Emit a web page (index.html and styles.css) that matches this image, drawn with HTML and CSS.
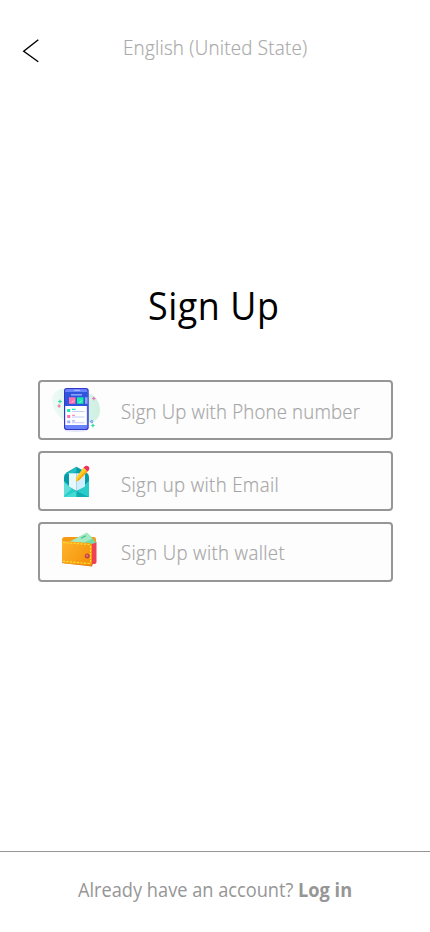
FILE: index.html
```html
<!DOCTYPE html>
<html lang="en">
<head>
<meta charset="utf-8">
<meta name="viewport" content="width=device-width, initial-scale=1">
<title>Sign Up</title>
<link rel="stylesheet" href="styles.css">
</head>
<body>
<div class="screen">
  <header class="topbar">
    <svg class="back" viewBox="0 0 18 26"><path d="M16.3 2.8 1.7 14.3 16.3 24.800"/></svg>
    <span class="language">English (United State)</span>
  </header>
  <main class="content">
    <h1 class="title">Sign Up</h1>
    <div class="options">
      <a class="option">
        <svg class="icon" viewBox="40 382 64 56">
          <defs>
            <linearGradient id="blob"><stop offset="0" stop-color="#edfaf5"/><stop offset="1" stop-color="#cdf0e1"/></linearGradient>
          </defs>
          <path fill="url(#blob)" d="M52.500 397c2-6 8-9 14.500-8 7 1 8 4 17 4 10-1 16 8 16 17 0 10-7 13-14 12-9-1-12 3-20-1-4-2-7-4-10-9-3-4-4.500-10-3.500-15z"/>
          <ellipse cx="76" cy="430.5" rx="11.5" ry="1.5" fill="#e3e5fb"/>
          <rect x="64" y="388" width="24.7" height="42" rx="2.8" fill="#3336c4"/>
          <rect x="65" y="389" width="22.5" height="40" rx="2" fill="#6a83fa"/>
          <path fill="#2f54dd" d="M65 392h22.5v14H65z"/>
          <path fill="#fff" d="M65.3 406h21.5v19H65.3z"/>
          <path stroke="#b7c2ff" d="M74 390.3h6"/>
          <path stroke="#8fa8f8" stroke-width="1.5" d="M71 394.8h11"/>
          <path fill="#ff6fb0" d="M69 397.3h6.5v6.5H69z"/>
          <path fill="#11efa9" d="M77 397.3h6.4v6.5H77z"/>
          <path fill="#92a6fb" d="M85 397.3h2.5v6.5H85z"/>
          <path fill="none" stroke="#fff" stroke-width=".6" d="m71.500 402.4 1.500-.8 1.200-1.300m5.300 2.100 1.500-.8 1.200-1.300"/>
          <path fill="#11efa9" d="M67.2 409h3v3h-3zM72 408.8h3.5v1.1H72z"/>
          <path fill="#ff6fb0" d="M67.2 415h3v3h-3zM72 414.7h3v1.1h-3z"/>
          <path fill="#a2adff" d="M67.2 420.5h3v2.8h-3zM72 420.3h3v1.1h-3z"/>
          <path stroke="#c4cafd" d="M72 411.5h12.5M72 417h12.5M72 422.7h12.5"/>
          <path stroke="#24dda1" stroke-width="1.200" d="M58.2 401.5h3.6m-1.8-1.8v3.6m31.2 22.2h3.4m-1.7-1.7v3.4"/>
          <path stroke="#ed70a9" stroke-width="1.2" d="M57.4 406h3.4m-1.7-1.7v3.4m33-9.2h3.4m-1.7-1.7v3.4"/>
          <circle cx="91.7" cy="421.6" r="1.2" fill="#7fdde5" stroke="#6685e9" stroke-width=".8"/>
        </svg>
        <span class="label phone">Sign Up with Phone number</span>
      </a>
      <a class="option">
        <svg class="icon" viewBox="40 453 64 56">
          <path fill="#079ba6" d="M64 477q0-3 2.500-4.500L76.500 466.700l10 5.800Q89 474 89 477v19H64z"/>
          <path fill="#20bfc2" d="m76.500 466.700-12 8 12-2.500z"/>
          <path fill="#28cdca" d="m64 481 12.500 11L89 481v16H64z"/>
          <path fill="#e9f8ff" d="M69 473.300h7.500V491L69 486.500z"/>
          <path fill="#d2edfc" d="M76.500 473.300H85v13.200l-8.500 4.500z"/>
          <path fill="#62ded8" d="m64 482 7.500 7-7.500 7z"/>
          <path fill="#42dcd2" d="m64 497 12.500-6v6z"/>
          <path fill="#10adb2" d="m76.500 491 12.500 6H76.500z"/>
          <path fill="#ffcd28" d="m83.500 467.500 4.100 3.900-8.200 8.600-3.600 1.500.6-4.200z"/>
          <path fill="#f5a713" d="m86.200 470 1.400 1.400-8.200 8.600-3.600 1.500z"/>
          <path fill="#ed315c" d="m83.500 467.500 1.500-1.300c2-1.300 4.300.2 4.300 2l-.3 1.800-1.400 1.400z"/>
        </svg>
        <span class="label email">Sign up with Email</span>
      </a>
      <a class="option">
        <svg class="icon" viewBox="40 524 64 56">
          <defs>
            <linearGradient id="leather" x2="1" y2=".7"><stop stop-color="#ffb52d"/><stop offset="1" stop-color="#f4940c"/></linearGradient>
          </defs>
          <path fill="#f69a16" d="M62 540q0-3 3-3h29q2 0 2 3v5H62z"/>
          <path fill="#ee4254" d="M85 542h11.500v20q0 2-2 2H85z"/>
          <path fill="#75d9a5" d="m69.500 541.700 17.500-9q5 4 9 10l-7 2z"/>
          <path fill="#a4ebc5" d="m69.500 541.700 17.500-9q3 3 5 6l-8 4z"/>
          <path stroke="#45ba82" stroke-width="1.200" d="m81 538.200 5-2.400"/>
          <path fill="#d96a20" d="m62 563 30 3.500 1-3-30-3z"/>
          <path fill="url(#leather)" d="M62 539q0 2 3 2l24 2q3 .3 3 3v17q0 3-3 2.600l-24.500-2.200Q62 563 62 560z"/>
          <path fill="none" stroke="#ffe22e" stroke-width="1.100" stroke-dasharray="2.200 1.300" d="m63 542.500 25.500 2q2 .2 2 2v14.800q0 2.500-2 2.200l-25.500-2.300"/>
          <circle cx="87.200" cy="556" r="2.500" fill="#c4444b"/>
          <circle cx="87" cy="555.700" r=".9" fill="#ef8b75"/>
        </svg>
        <span class="label wallet">Sign Up with wallet</span>
      </a>
    </div>
  </main>
  <footer class="footer"><p class="account">Already have an account? <b>Log in</b></p></footer>
</div>
</body>
</html>
```
FILE: styles.css
```css
* { box-sizing: border-box; }
body { margin: 0; background: #fff; font-family: "Open Sans", sans-serif; }
.screen { height: 932px; display: flex; flex-direction: column; overflow: hidden; }
.topbar { height: 80px; display: grid; grid-template-columns: 123px 1fr; padding-top: 36px; }
.back { width: 18px; height: 26px; margin: 1px 0 0 22px; fill: none; stroke: #000; stroke-width: 1.4; }
.language { font-size: 20px; line-height: 24px; font-weight: 300; color: #a9a9a9; -webkit-text-stroke: .2px #a9a9a9; white-space: nowrap; justify-self: start; transform-origin: left; transform: scaleX(.94); letter-spacing: .24px; }
.content { flex: 1; padding: 200px 37px 0 38px; }
.title { margin: 0 0 0 110px; width: max-content; font-size: 39px; line-height: 50px; font-weight: 400; color: #000; transform-origin: left; transform: scaleX(.92); letter-spacing: .6px; }
.options { display: grid; gap: 11px; margin-top: 50px; }
.option { height: 60px; border: 2px solid #969696; border-radius: 4px; background: #fdfdfd; display: flex; }
.icon { width: 64px; height: 56px; flex: none; }
.label { margin: 18px 0 0 17px; font-size: 20px; line-height: 24px; height: 24px; font-weight: 300; color: #a5a5a5; -webkit-text-stroke: .2px #a5a5a5; white-space: nowrap; transform-origin: left; transform: scaleX(.93); }
.phone { letter-spacing: .2px; }
.email { margin-top: 20px; letter-spacing: .4px; }
.wallet { margin-top: 17px; letter-spacing: .4px; }
.footer { height: 81px; border-top: 1px solid #969696; padding: 26px 0 0 78px; }
.account { margin: 0; width: max-content; font-size: 20px; line-height: 24px; color: #969696; transform-origin: left; transform: scaleX(.91); }
.account b { font-weight: 700; }
```
